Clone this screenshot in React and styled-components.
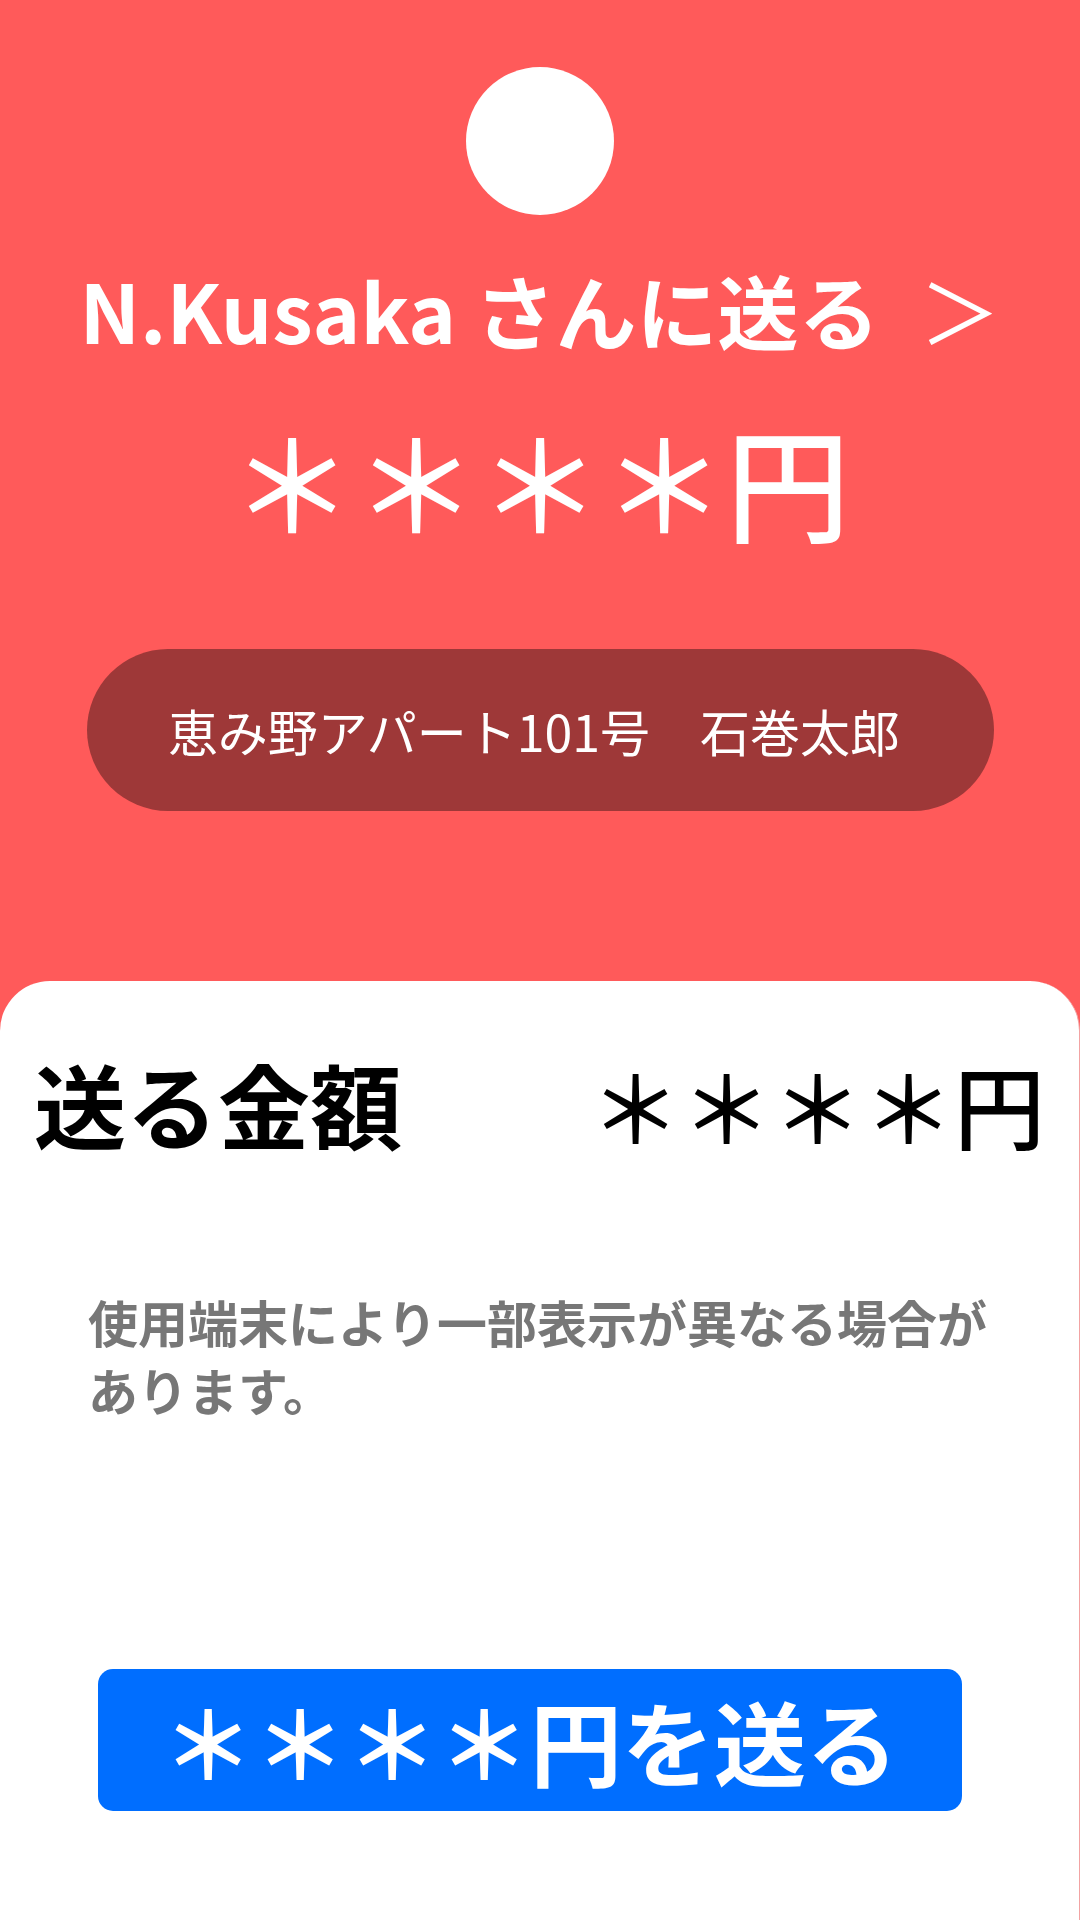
import styled, { createGlobalStyle } from "styled-components";

const GlobalStyle = createGlobalStyle`
  body {
    margin: 0;
    background: #ff5a5a;
    font-family: "Noto Sans CJK JP", "Noto Sans", sans-serif;
  }
`;

const Page = styled.div`
  width: 1080px;
  min-height: 1920px;
  display: flex;
  flex-direction: column;
  background: #ff5a5a;
`;

const Header = styled.header`
  display: flex;
  flex-direction: column;
  align-items: center;
  padding-top: 67px;
  color: #fff;
`;

const Avatar = styled.div`
  width: 148px;
  height: 148px;
  border-radius: 50%;
  background: #fff;
`;

const Recipient = styled.h1`
  margin: 53px 0 0;
  font-size: 81px;
  line-height: 1;
  font-weight: 700;
  white-space: nowrap;
`;

const Arrow = styled.span`
  margin-left: 40px;
  font-weight: 400;
`;

const HeadAmount = styled.div`
  margin-top: 68px;
  font-size: 124px;
  line-height: 1;
  font-weight: 500;
`;

const AddressPill = styled.div`
  margin-top: 108px;
  width: 907px;
  height: 162px;
  box-sizing: border-box;
  padding-right: 12px;
  border-radius: 81px;
  background: #9e3838;
  display: flex;
  align-items: center;
  justify-content: center;
  font-size: 50px;
  font-weight: 400;
  white-space: pre;
`;

const Card = styled.section`
  margin-top: 170px;
  flex: 1;
  background: #fff;
  border-radius: 50px 50px 0 0;
  border-right: 1px solid #f2a3a3;
  display: flex;
  flex-direction: column;
`;

const AmountRow = styled.div`
  display: flex;
  align-items: center;
  justify-content: space-between;
  padding: 76px 34px 0 34px;
  color: #000;
  line-height: 1;
`;

const Label = styled.div`
  font-size: 92px;
  font-weight: 700;
`;

const Value = styled.div`
  font-size: 91px;
  font-weight: 500;
`;

const Notice = styled.p`
  margin: 138px 0 0;
  padding: 0 60px 0 88px;
  font-size: 50px;
  line-height: 68px;
  font-weight: 700;
  color: #777;
`;

const SendButton = styled.button`
  margin: 246px 0 0 98px;
  width: 864px;
  height: 142px;
  border: none;
  border-radius: 15px;
  background: #006eff;
  color: #fff;
  font-family: inherit;
  font-size: 92px;
  line-height: 1;
  font-weight: 700;
  display: flex;
  align-items: center;
  justify-content: center;
  padding: 0;
`;

export default function App() {
  return (
    <>
      <GlobalStyle />
      <Page>
        <Header>
          <Avatar />
          <Recipient>
            N.Kusaka さんに送る<Arrow>＞</Arrow>
          </Recipient>
          <HeadAmount>＊＊＊＊円</HeadAmount>
          <AddressPill>恵み野アパート101号　石巻太郎</AddressPill>
        </Header>
        <Card>
          <AmountRow>
            <Label>送る金額</Label>
            <Value>＊＊＊＊円</Value>
          </AmountRow>
          <Notice>使用端末により一部表示が異なる場合があります。</Notice>
          <SendButton>＊＊＊＊円を送る</SendButton>
        </Card>
      </Page>
    </>
  );
}
